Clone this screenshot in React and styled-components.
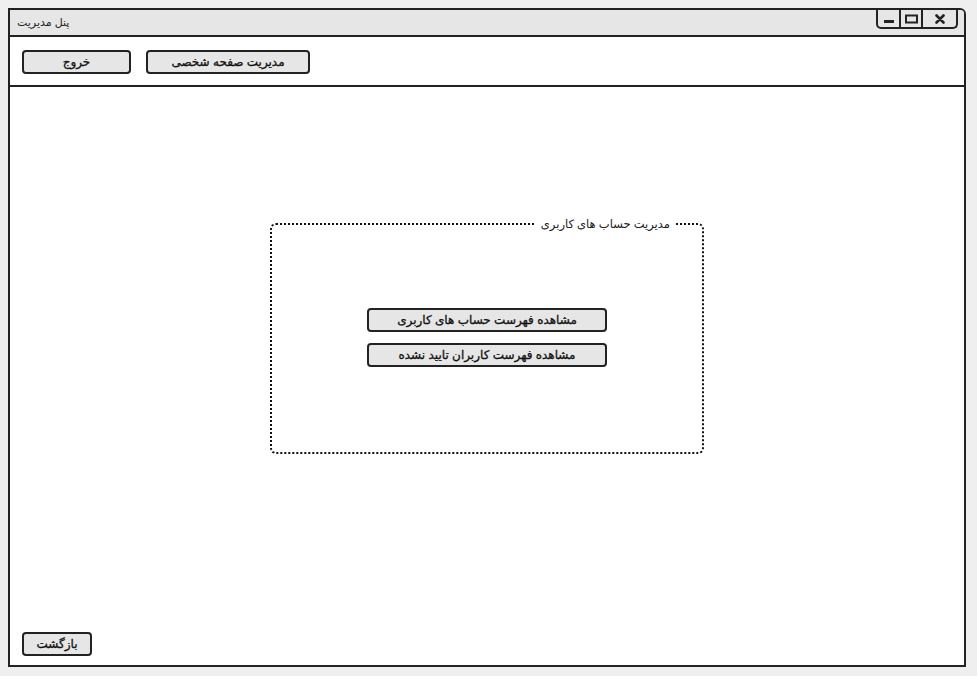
import React from 'react';
import styled, { createGlobalStyle } from 'styled-components';

const GlobalStyle = createGlobalStyle`
  body {
    margin: 0;
    background: #efefef;
    font-family: "Liberation Sans", "DejaVu Sans", sans-serif;
  }
`;

const Page = styled.div`
  padding: 8px 10px 8px 8px;
`;

const Window = styled.div`
  width: 958px;
  height: 659px;
  box-sizing: border-box;
  border: 2px solid #222;
  border-radius: 0 6px 0 0;
  background: #fff;
  display: flex;
  flex-direction: column;
  overflow: hidden;
`;

const TitleBar = styled.div`
  height: 25px;
  flex-shrink: 0;
  background: #e6e6e6;
  border-bottom: 2px solid #222;
  display: flex;
  align-items: center;
  justify-content: space-between;
  padding-left: 7px;
`;

const Title = styled.span`
  font-size: 11px;
  color: #222;
  direction: rtl;
`;

const Controls = styled.div`
  display: flex;
  align-self: flex-start;
  margin-right: 6px;
  height: 17px;
  border: 2px solid #222;
  border-top: none;
  border-radius: 0 0 5px 5px;
`;

const ControlCell = styled.div`
  width: ${(p) => p.$w}px;
  display: flex;
  align-items: center;
  justify-content: center;
  border-left: ${(p) => (p.$first ? 'none' : '2px solid #222')};
`;

const Toolbar = styled.div`
  height: 50px;
  flex-shrink: 0;
  box-sizing: border-box;
  border-bottom: 2px solid #222;
  display: flex;
  align-items: center;
  gap: 15px;
  padding: 1px 0 0 12px;
`;

const Button = styled.button`
  width: ${(p) => p.$w}px;
  height: 24px;
  box-sizing: border-box;
  background: #e6e6e6;
  border: 2px solid #222;
  border-radius: 4px;
  font-family: "Liberation Sans", "DejaVu Sans", sans-serif;
  font-size: 12px;
  font-weight: normal;
  -webkit-text-stroke: 0.3px #111;
  color: #111;
  direction: rtl;
  padding: 0;
  display: flex;
  align-items: center;
  justify-content: center;
`;

const Main = styled.div`
  flex: 1;
  display: flex;
  flex-direction: column;
  padding: 0 12px 9px 12px;
`;

const Group = styled.fieldset`
  align-self: center;
  width: 434px;
  height: 237px;
  box-sizing: border-box;
  margin: 130px 0 0 0;
  padding: 0;
  border: 2px dotted #111;
  border-radius: 6px;
  direction: rtl;
  display: flex;
  flex-direction: column;
  align-items: center;
`;

const Legend = styled.legend`
  margin-right: 26px;
  padding: 0 6px;
  font-size: 11.5px;
  color: #222;
`;

const GroupButtons = styled.div`
  margin-top: 77px;
  display: flex;
  flex-direction: column;
  gap: 11px;
`;

const Bottom = styled.div`
  margin-top: auto;
  display: flex;
`;

export default function App() {
  return (
    <>
      <GlobalStyle />
      <Page>
        <Window>
          <TitleBar>
            <Title>پنل مدیریت</Title>
            <Controls>
              <ControlCell $w={21} $first>
                <svg width="10" height="10" viewBox="0 0 10 10">
                  <rect x="0" y="6" width="10" height="3" fill="#222" />
                </svg>
              </ControlCell>
              <ControlCell $w={20}>
                <svg width="13" height="10" viewBox="0 0 13 10">
                  <rect x="1" y="1.5" width="11" height="7" fill="none" stroke="#222" strokeWidth="2" />
                </svg>
              </ControlCell>
              <ControlCell $w={33}>
                <svg width="10" height="10" viewBox="0 0 10 10">
                  <path d="M1.5 1.5 L8.5 8.5 M8.5 1.5 L1.5 8.5" stroke="#222" strokeWidth="2.6" strokeLinecap="round" />
                </svg>
              </ControlCell>
            </Controls>
          </TitleBar>
          <Toolbar>
            <Button $w={109}>خروج</Button>
            <Button $w={164}>مدیریت صفحه شخصی</Button>
          </Toolbar>
          <Main>
            <Group>
              <Legend>مدیریت حساب های کاربری</Legend>
              <GroupButtons>
                <Button $w={240}>مشاهده فهرست حساب های کاربری</Button>
                <Button $w={240}>مشاهده فهرست کاربران تایید نشده</Button>
              </GroupButtons>
            </Group>
            <Bottom>
              <Button $w={70}>بازگشت</Button>
            </Bottom>
          </Main>
        </Window>
      </Page>
    </>
  );
}
